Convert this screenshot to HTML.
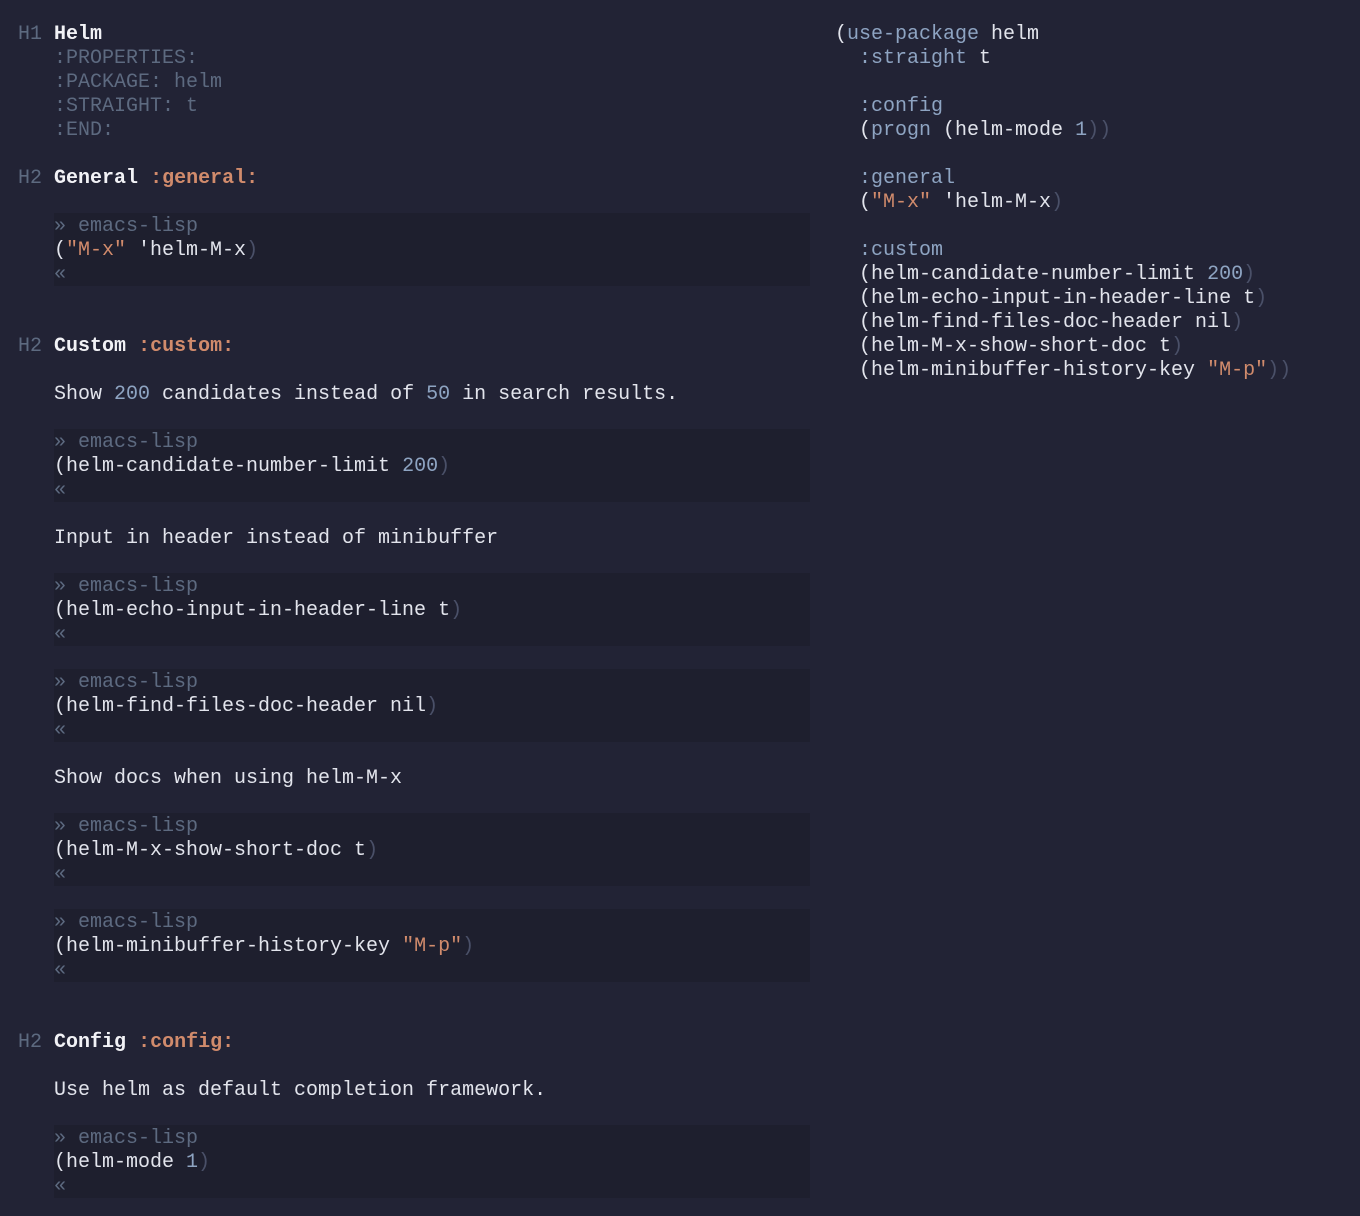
<!DOCTYPE html>
<html><head><meta charset="utf-8"><style>
html,body{margin:0;padding:0;background:#222335;}
body{width:1360px;height:1216px;position:relative;overflow:hidden;font-family:"Liberation Mono",monospace;font-size:20px;color:#e2e4ec;}
.l{position:absolute;height:24px;line-height:24px;white-space:pre;margin-top:2px;}
.blk{position:absolute;left:54px;width:756px;height:73px;background:#1e1f2e;}
.g{color:#5d6a80}.o{color:#d18b6c}.b{color:#8ea4c2}.d{color:#4a5068}.w{color:#e2e4ec}
.h{font-weight:bold;color:#f2f2f6}
</style></head><body>
<div class="blk" style="top:213px"></div>
<div class="blk" style="top:429px"></div>
<div class="blk" style="top:573px"></div>
<div class="blk" style="top:669px"></div>
<div class="blk" style="top:813px"></div>
<div class="blk" style="top:909px"></div>
<div class="blk" style="top:1125px"></div>

<div class="l" style="left:18px;top:21px"><span class="g">H1</span> <span class="h">Helm</span></div>
<div class="l g" style="left:54px;top:45px">:PROPERTIES:</div>
<div class="l g" style="left:54px;top:69px">:PACKAGE: helm</div>
<div class="l g" style="left:54px;top:93px">:STRAIGHT: t</div>
<div class="l g" style="left:54px;top:117px">:END:</div>

<div class="l" style="left:18px;top:165px"><span class="g">H2</span> <span class="h">General</span> <span class="o" style="font-weight:bold">:general:</span></div>
<div class="l g" style="left:54px;top:213px">» emacs-lisp</div>
<div class="l" style="left:54px;top:237px">(<span class="o">"M-x"</span> 'helm-M-x<span class="d">)</span></div>
<div class="l g" style="left:54px;top:261px">«</div>

<div class="l" style="left:18px;top:333px"><span class="g">H2</span> <span class="h">Custom</span> <span class="o" style="font-weight:bold">:custom:</span></div>
<div class="l" style="left:54px;top:381px">Show <span class="b">200</span> candidates instead of <span class="b">50</span> in search results.</div>
<div class="l g" style="left:54px;top:429px">» emacs-lisp</div>
<div class="l" style="left:54px;top:453px">(helm-candidate-number-limit <span class="b">200</span><span class="d">)</span></div>
<div class="l g" style="left:54px;top:477px">«</div>

<div class="l" style="left:54px;top:525px">Input in header instead of minibuffer</div>
<div class="l g" style="left:54px;top:573px">» emacs-lisp</div>
<div class="l" style="left:54px;top:597px">(helm-echo-input-in-header-line t<span class="d">)</span></div>
<div class="l g" style="left:54px;top:621px">«</div>

<div class="l g" style="left:54px;top:669px">» emacs-lisp</div>
<div class="l" style="left:54px;top:693px">(helm-find-files-doc-header nil<span class="d">)</span></div>
<div class="l g" style="left:54px;top:717px">«</div>

<div class="l" style="left:54px;top:765px">Show docs when using helm-M-x</div>
<div class="l g" style="left:54px;top:813px">» emacs-lisp</div>
<div class="l" style="left:54px;top:837px">(helm-M-x-show-short-doc t<span class="d">)</span></div>
<div class="l g" style="left:54px;top:861px">«</div>

<div class="l g" style="left:54px;top:909px">» emacs-lisp</div>
<div class="l" style="left:54px;top:933px">(helm-minibuffer-history-key <span class="o">"M-p"</span><span class="d">)</span></div>
<div class="l g" style="left:54px;top:957px">«</div>

<div class="l" style="left:18px;top:1029px"><span class="g">H2</span> <span class="h">Config</span> <span class="o" style="font-weight:bold">:config:</span></div>
<div class="l" style="left:54px;top:1077px">Use helm as default completion framework.</div>
<div class="l g" style="left:54px;top:1125px">» emacs-lisp</div>
<div class="l" style="left:54px;top:1149px">(helm-mode <span class="b">1</span><span class="d">)</span></div>
<div class="l g" style="left:54px;top:1173px">«</div>

<div class="l" style="left:835px;top:21px">(<span class="b">use-package</span> helm</div>
<div class="l" style="left:835px;top:45px">  <span class="b">:straight</span> t</div>
<div class="l" style="left:835px;top:93px">  <span class="b">:config</span></div>
<div class="l" style="left:835px;top:117px">  (<span class="b">progn</span> (helm-mode <span class="b">1</span><span class="d">))</span></div>
<div class="l" style="left:835px;top:165px">  <span class="b">:general</span></div>
<div class="l" style="left:835px;top:189px">  (<span class="o">"M-x"</span> 'helm-M-x<span class="d">)</span></div>
<div class="l" style="left:835px;top:237px">  <span class="b">:custom</span></div>
<div class="l" style="left:835px;top:261px">  (helm-candidate-number-limit <span class="b">200</span><span class="d">)</span></div>
<div class="l" style="left:835px;top:285px">  (helm-echo-input-in-header-line t<span class="d">)</span></div>
<div class="l" style="left:835px;top:309px">  (helm-find-files-doc-header nil<span class="d">)</span></div>
<div class="l" style="left:835px;top:333px">  (helm-M-x-show-short-doc t<span class="d">)</span></div>
<div class="l" style="left:835px;top:357px">  (helm-minibuffer-history-key <span class="o">"M-p"</span><span class="d">))</span></div>
</body></html>
